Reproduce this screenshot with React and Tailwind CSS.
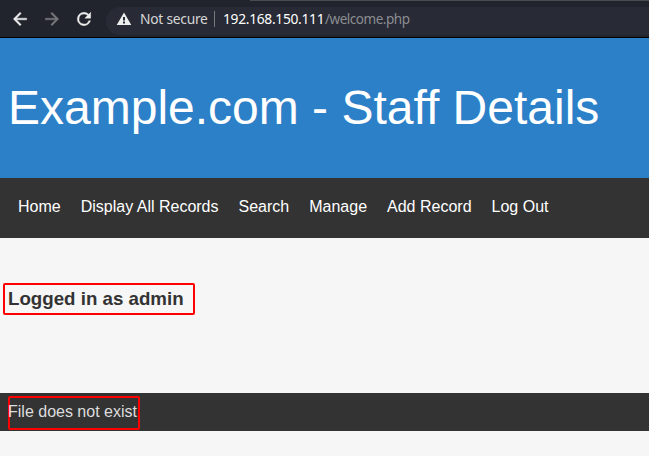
const links = ["Home", "Display All Records", "Search", "Manage", "Add Record", "Log Out"];

const icons = {
  back: "M20 11H7.83l5.59-5.59L12 4l-8 8 8 8 1.41-1.41L7.83 13H20v-2z",
  forward: "M12 4l-1.41 1.41L16.17 11H4v2h12.17l-5.58 5.59L12 20l8-8z",
  reload:
    "M17.65 6.35A7.958 7.958 0 0 0 12 4a8 8 0 1 0 7.73 10h-2.08A6 6 0 1 1 12 6c1.66 0 3.14.69 4.22 1.78L13 11h7V4l-2.35 2.35z",
};

function ToolIcon({ name, className }) {
  return (
    <svg viewBox="0 0 24 24" className={`size-5 fill-current stroke-current stroke-[0.5] ${className}`}>
      <path d={icons[name]} />
    </svg>
  );
}

function WarningIcon() {
  return (
    <svg viewBox="0 0 16 16" className="size-4 fill-[#eeeeee]">
      <path fillRule="evenodd" d="M8 1.5 15.3 14H.7L8 1.5ZM7 6v3.5h2V6H7Zm0 4.5v2h2v-2H7Z" />
    </svg>
  );
}

function BrowserBar() {
  return (
    <div className="h-[38px] border-b border-black bg-[#22242d] font-['Noto_Sans',sans-serif] text-[13.8px]">
      <div className="flex h-px justify-end">
        <div className="w-[399px] bg-[#4b4c52]" />
      </div>
      <div className="flex h-9 items-center pl-[10px]">
        <ToolIcon name="back" className="text-[#eeeeee]" />
        <ToolIcon name="forward" className="ml-3 text-[#77787b]" />
        <ToolIcon name="reload" className="ml-3 text-[#eeeeee]" />
        <div className="mt-1 ml-3 flex h-7 flex-1 items-center rounded-l-full bg-[#282a35] pb-[4px] pl-[10px] whitespace-nowrap">
          <WarningIcon />
          <span className="ml-2 w-[67px] tracking-[-0.25px] text-[#d5d6d8]">Not secure</span>
          <span className="ml-[7px] h-4 w-px bg-[#77787b]" />
          <span className="ml-2 w-[102px] tracking-[-0.3px] text-white">192.168.150.111</span>
          <span className="text-[13.5px] tracking-[-0.47px] text-[#8b8d91]">/welcome.php</span>
        </div>
      </div>
    </div>
  );
}

export default function App() {
  return (
    <div className="flex h-[456px] w-full flex-col overflow-hidden bg-[#f6f6f6] font-['Liberation_Sans',Arial,sans-serif] text-base">
      <BrowserBar />
      <header className="flex h-[140px] items-center bg-[#2c80c8] pl-2">
        <h1 className="text-5xl leading-[56px] whitespace-nowrap text-white">Example.com - Staff Details</h1>
      </header>
      <nav className="flex h-[60px] items-center gap-5 bg-[#333333] pb-[2px] pl-[18px] whitespace-nowrap text-white">
        {links.map((link) => (
          <a key={link}>{link}</a>
        ))}
      </nav>
      <main className="h-[155px] pt-[45px] pl-[3px]">
        <div className="flex h-8 w-48 items-center rounded-[2px] border-2 border-[#ff0000] pl-[3px]">
          <h3 className="text-[18.72px] leading-[22px] font-bold whitespace-nowrap text-[#333333]">Logged in as admin</h3>
        </div>
      </main>
      <footer className="flex h-[38px] bg-[#333333] pt-[3px] pl-2">
        <div className="flex h-[34px] w-[132px] rounded-[2px] border-2 border-[#ff0000] pt-[2px]">
          <p className="-ml-[2px] whitespace-nowrap text-[#dddddd]">File does not exist</p>
        </div>
      </footer>
    </div>
  );
}
